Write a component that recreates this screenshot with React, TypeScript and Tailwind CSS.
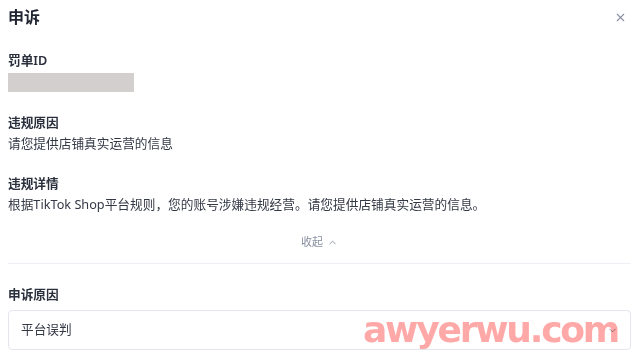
import React from "react";
import { X, ChevronUp, ChevronDown } from "lucide-react";

const FONT = { fontFamily: '"Noto Sans", "Noto Sans CJK SC", sans-serif' };

function Label({ children, className = "" }: { children: React.ReactNode; className?: string }) {
  return <div className={`text-[12.7px] leading-[20px] font-semibold text-[#2a303c] ${className}`}>{children}</div>;
}

function Body({ children, className = "" }: { children: React.ReactNode; className?: string }) {
  return <div className={`text-[12.7px] leading-[20px] text-[#333845] ${className}`}>{children}</div>;
}

export default function App() {
  return (
    <div className="relative h-[363px] w-[639px] overflow-hidden bg-white px-2" style={FONT}>
      <div className="flex h-[34px] items-center justify-between">
        <h1 className="text-[16px] font-bold leading-6 text-[#1f2430]">申诉</h1>
        <X size={13} strokeWidth={2} className="mr-[4px] text-[#8a8fa3]" />
      </div>

      <Label className="mt-4">罚单ID</Label>
      <div className="mt-[3px] h-[19px] w-[126px] bg-[#d3cfcf]" />

      <Label className="mt-5">违规原因</Label>
      <Body className="mt-px">请您提供店铺真实运营的信息</Body>

      <Label className="mt-5">违规详情</Label>
      <Body className="mt-px">根据TikTok Shop平台规则，您的账号涉嫌违规经营。请您提供店铺真实运营的信息。</Body>

      <div className="mt-[18px] flex h-5 items-center justify-center gap-1 text-[11px] text-[#8a90a2]">
        <span>收起</span>
        <ChevronUp size={11} strokeWidth={2} />
      </div>

      <div className="mt-[11px] h-px w-full bg-[#eef0f5]" />

      <Label className="mt-5">申诉原因</Label>
      <div className="mt-[6px] flex h-10 items-center justify-between rounded-[4px] border border-[#e4e6ee] pl-3 pr-3">
        <span className="text-[12.7px] text-[#333845]">平台误判</span>
        <ChevronDown size={11} strokeWidth={2} className="text-[#8a90a2]" />
      </div>

      <div
        className="pointer-events-none absolute left-[363px] top-[312px] text-[36px] font-bold leading-none tracking-[-2.2px] text-[#ffa8a8] mix-blend-multiply"
        style={{ fontFamily: '"DejaVu Sans", sans-serif' }}
      >
        awyerwu.com
      </div>
    </div>
  );
}
